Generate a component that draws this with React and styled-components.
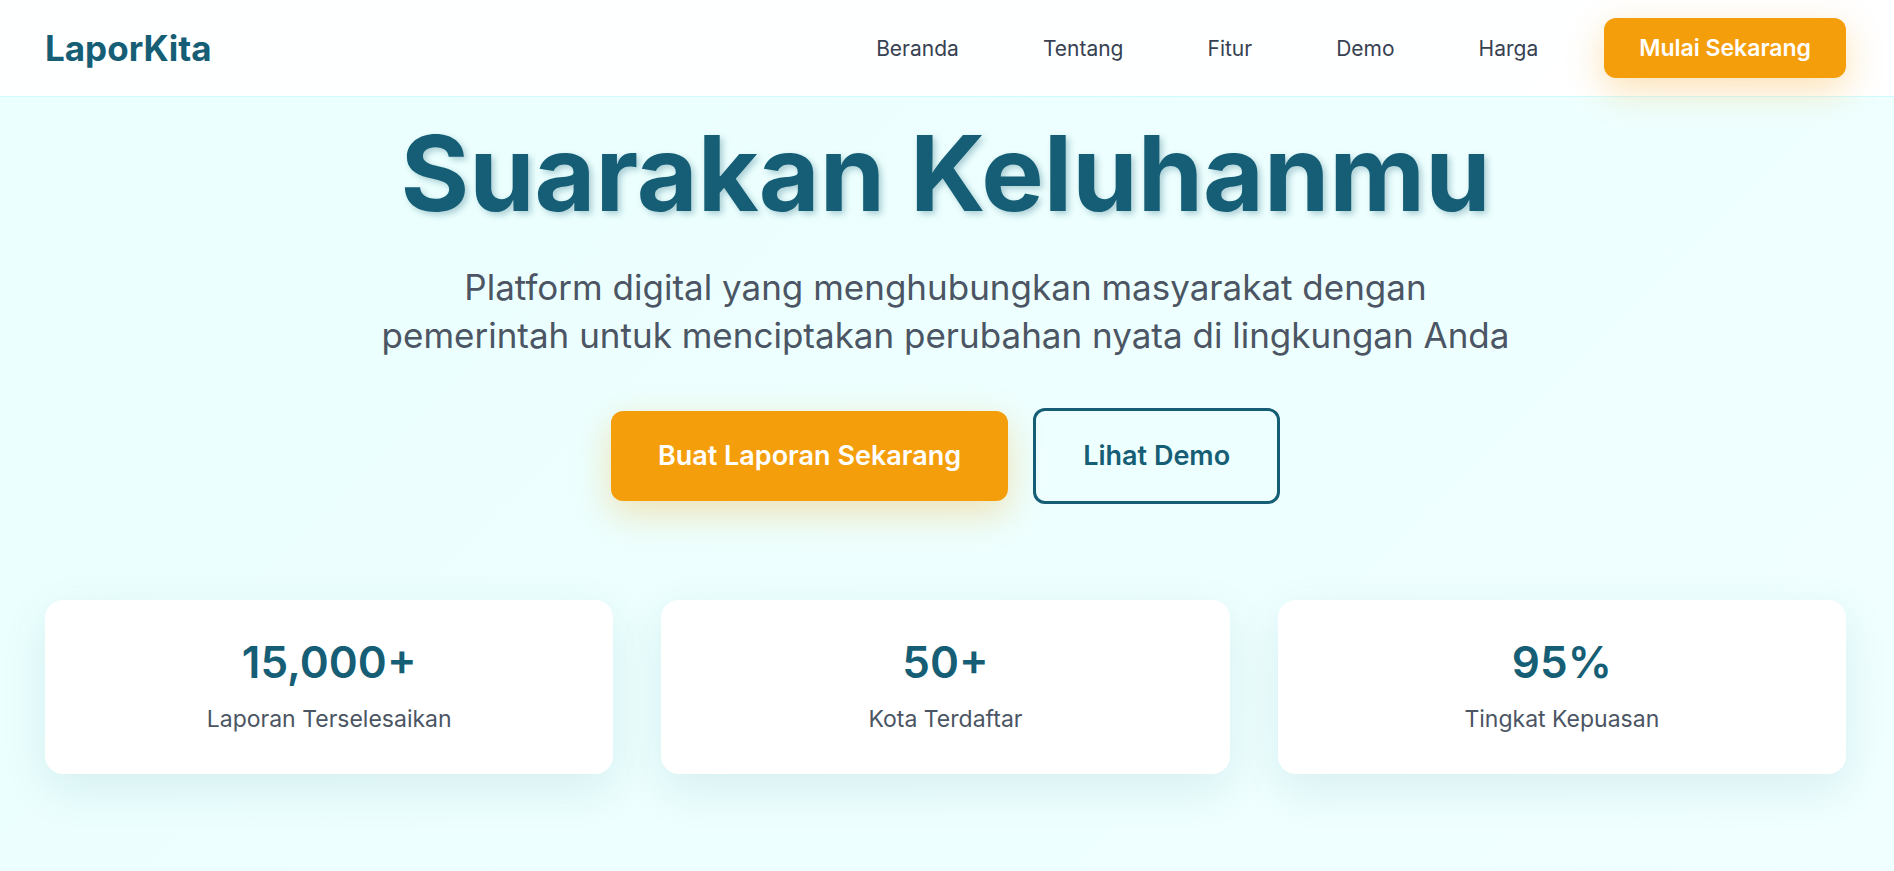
import React from "react";
import styled, { createGlobalStyle, css } from "styled-components";

const colors = {
  teal: "#155e75",
  amber: "#f59e0b",
  text: "#374151",
  muted: "#4b5563",
  line: "#cffafe",
};

const GlobalStyle = createGlobalStyle`
  *, *::before, *::after { box-sizing: border-box; }
  body {
    margin: 0;
    font-family: Inter, "Liberation Sans", sans-serif;
    color: ${colors.text};
  }
`;

const Page = styled.div`
  min-height: 100vh;
  display: flex;
  flex-direction: column;
  background: linear-gradient(135deg, #eafffe 0%, #f0ffff 100%);
`;

const Header = styled.header`
  position: relative;
  z-index: 1;
  display: flex;
  align-items: center;
  justify-content: space-between;
  padding: 18px 48px 18px 45px;
  background: rgba(255, 255, 255, 0.95);
  border-bottom: 1px solid ${colors.line};
`;

const Logo = styled.a`
  font-size: 35px;
  line-height: 48px;
  font-weight: 700;
  color: ${colors.teal};
  text-decoration: none;
`;

const Nav = styled.nav`
  display: flex;
  align-items: center;
  gap: 48px;
`;

const NavLink = styled.a`
  padding: 2px 18px 0;
  font-size: 21px;
  line-height: 36px;
  color: ${colors.text};
  text-decoration: none;
`;

const Button = styled.button`
  font-family: inherit;
  font-weight: 600;
  border-radius: 12px;
  cursor: pointer;
  white-space: nowrap;

  ${({ $size }) =>
    $size === "large"
      ? css`
          padding: 27px 47px;
          font-size: 27px;
          line-height: 36px;
        `
      : css`
          padding: 12px 35px;
          font-size: 23px;
          line-height: 36px;
        `}

  ${({ $outline }) =>
    $outline
      ? css`
          color: ${colors.teal};
          background: transparent;
          border: 3px solid ${colors.teal};
        `
      : css`
          color: #fff;
          background: ${colors.amber};
          border: 0;
          box-shadow: 0 12px 36px rgba(245, 158, 11, 0.3);
        `}
`;

const Hero = styled.main`
  flex: 1;
  padding: 22px 48px 96px 45px;
`;

const Title = styled.h1`
  margin: 0 0 36px;
  font-size: 105px;
  line-height: 108px;
  font-weight: 700;
  text-align: center;
  color: ${colors.teal};
  text-shadow: 3px 3px 6px rgba(21, 94, 117, 0.3);
`;

const Subtitle = styled.p`
  max-width: 1152px;
  margin: 0 auto 49px;
  font-size: 35px;
  line-height: 48px;
  text-align: center;
  color: ${colors.muted};
`;

const Actions = styled.div`
  display: flex;
  align-items: center;
  justify-content: center;
  gap: 25px;
  margin-bottom: 96px;
`;

const Stats = styled.section`
  display: grid;
  grid-template-columns: repeat(3, 1fr);
  gap: 48px;
`;

const Card = styled.article`
  padding: 36px;
  text-align: center;
  background: #fff;
  border-radius: 18px;
  box-shadow: 0 15px 45px rgba(21, 94, 117, 0.1);
`;

const Value = styled.div`
  margin-bottom: 12px;
  font-size: 44px;
  line-height: 53px;
  font-weight: 600;
  color: ${colors.teal};
`;

const Label = styled.div`
  font-size: 23px;
  line-height: 37px;
  color: ${colors.muted};
`;

const links = ["Beranda", "Tentang", "Fitur", "Demo", "Harga"];

const stats = [
  { value: "15,000+", label: "Laporan Terselesaikan" },
  { value: "50+", label: "Kota Terdaftar" },
  { value: "95%", label: "Tingkat Kepuasan" },
];

export default function App() {
  return (
    <>
      <GlobalStyle />
      <Page>
        <Header>
          <Logo href="#">LaporKita</Logo>
          <Nav>
            {links.map((name) => (
              <NavLink key={name} href={`#${name.toLowerCase()}`}>
                {name}
              </NavLink>
            ))}
            <Button type="button">Mulai Sekarang</Button>
          </Nav>
        </Header>
        <Hero>
          <Title>Suarakan Keluhanmu</Title>
          <Subtitle>
            Platform digital yang menghubungkan masyarakat dengan pemerintah
            untuk menciptakan perubahan nyata di lingkungan Anda
          </Subtitle>
          <Actions>
            <Button type="button" $size="large">
              Buat Laporan Sekarang
            </Button>
            <Button type="button" $size="large" $outline>
              Lihat Demo
            </Button>
          </Actions>
          <Stats>
            {stats.map(({ value, label }) => (
              <Card key={label}>
                <Value>{value}</Value>
                <Label>{label}</Label>
              </Card>
            ))}
          </Stats>
        </Hero>
      </Page>
    </>
  );
}
